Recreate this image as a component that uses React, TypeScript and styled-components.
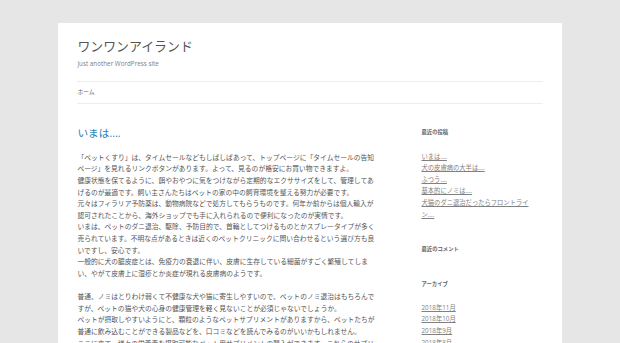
import React from 'react';
import styled, { createGlobalStyle } from 'styled-components';

const GlobalStyle = createGlobalStyle`
  html,
  body {
    margin: 0;
    padding: 0;
    background: #e6e6e6;
  }
  body {
    font-family: 'Open Sans', 'Noto Sans CJK JP', sans-serif;
    color: #444;
  }
`;

const recentPosts = [
  'いまは….',
  '犬の皮膚病の大半は….',
  'ふつう….',
  '基本的にノミは….',
  '犬猫のダニ退治だったらフロントライン….',
];

const archives = ['2018年11月', '2018年10月', '2018年9月', '2018年8月', '2018年7月'];

function App() {
  return (
    <>
      <GlobalStyle />
      <Site lang="ja">
        <Header>
          <SiteTitle>
            <a href="#">ワンワンアイランド</a>
          </SiteTitle>
          <Tagline>Just another WordPress site</Tagline>
          <Nav>
            <NavLink href="#">ホーム</NavLink>
          </Nav>
        </Header>
        <Main>
          <Content>
            <article>
              <EntryTitle>
                <a href="#">いまは….</a>
              </EntryTitle>
              <Paragraph>
                「ペットくすり」は、タイムセールなどもしばしばあって、トップページに「タイムセールの告知ページ」を見れるリンクボタンがあります。よって、見るのが格安にお買い物できますよ。
                <br />
                健康状態を保てるように、餌やおやつに気をつけながら定期的なエクササイズをして、管理してあげるのが最適です。飼い主さんたちはペットの家の中の飼育環境を整える努力が必要です。
                <br />
                元々はフィラリア予防薬は、動物病院などで処方してもらうものです。何年か前からは個人輸入が認可されたことから、海外ショップでも手に入れられるので便利になったのが実情です。
                <br />
                いまは、ペットのダニ退治、駆除、予防目的で、首輪としてつけるものとかスプレータイプが多く売られています。不明な点があるときは近くのペットクリニックに問い合わせるという選び方も良いですし、安心です。
                <br />
                一般的に犬の膿皮症とは、免疫力の衰退に伴い、皮膚に生存している細菌がすごく繁殖してしまい、やがて皮膚上に湿疹とか炎症が現れる皮膚病のようです。
              </Paragraph>
              <Paragraph>
                普通、ノミはとりわけ弱くて不健康な犬や猫に寄生しやすいので、ペットのノミ退治はもちろんですが、ペットの猫や犬の心身の健康管理を軽く見ないことが必須じゃないでしょうか。
                <br />
                ペットが摂取しやすいようにと、顆粒のようなペットサプリメントがありますから、ペットたちが普通に飲み込むことができる製品などを、口コミなどを読んでみるのがいいかもしれません。
                <br />
                ここに来て、様々の栄養素を摂取可能なペット用サプリメントの購入ができます。これらのサプリメントを上手に使って、ペットの健康を守りましょう。
              </Paragraph>
            </article>
          </Content>
          <Sidebar>
            <Widget>
              <WidgetTitle>最近の投稿</WidgetTitle>
              <WidgetList>
                {recentPosts.map((title) => (
                  <li key={title}>
                    <a href="#">{title}</a>
                  </li>
                ))}
              </WidgetList>
            </Widget>
            <Widget>
              <WidgetTitle>最近のコメント</WidgetTitle>
              <WidgetList />
            </Widget>
            <Widget>
              <WidgetTitle>アーカイブ</WidgetTitle>
              <WidgetList>
                {archives.map((month) => (
                  <li key={month}>
                    <a href="#">{month}</a>
                  </li>
                ))}
              </WidgetList>
            </Widget>
          </Sidebar>
        </Main>
      </Site>
    </>
  );
}

const Site = styled.div`
  box-sizing: content-box;
  max-width: 465.2px;
  margin: 23.3px auto;
  padding: 0 19.4px;
  background: #fff;
  overflow: hidden;
`;

const Header = styled.header`
  padding: 11.63px 0;
`;

const SiteTitle = styled.h1`
  margin: 0;
  font-size: 12.9px;
  line-height: 23.3px;
  font-weight: 400;
  a {
    color: #555;
    text-decoration: none;
  }
`;

const Tagline = styled.h2`
  margin: 0;
  font-size: 6.3px;
  line-height: 11.63px;
  font-weight: 400;
  color: #808080;
`;

const Nav = styled.nav`
  display: flex;
  margin-top: 11.63px;
  border-top: 1px solid #ededed;
  border-bottom: 1px solid #ededed;
`;

const NavLink = styled.a`
  font-size: 5.8px;
  line-height: 20.6px;
  color: #6a6a6a;
  text-decoration: none;
  white-space: nowrap;
`;

const Main = styled.div`
  display: flex;
  justify-content: space-between;
  align-items: flex-start;
  margin-top: 11.63px;
`;

const Content = styled.main`
  width: 302.9px;
`;

const EntryTitle = styled.h1`
  margin: 0 0 11.63px;
  font-size: 10.66px;
  line-height: 12.8px;
  font-weight: 400;
  a {
    color: #2a82b6;
    text-decoration: none;
  }
`;

const Paragraph = styled.p`
  margin: 0 0 11.63px;
  font-size: 6.78px;
  line-height: 11.63px;
  color: #555;
`;

const Sidebar = styled.aside`
  width: 121.1px;
`;

const Widget = styled.section`
  margin-bottom: 23.3px;
`;

const WidgetTitle = styled.h3`
  margin: 0 0 11.63px;
  font-size: 5.33px;
  line-height: 11.63px;
  font-weight: 700;
  color: #636363;
`;

const WidgetList = styled.ul`
  margin: 0;
  padding: 0;
  max-width: 116px;
  list-style: none;
  li {
    font-size: 6.3px;
    line-height: 11.63px;
  }
  a {
    color: #808080;
    text-decoration: underline;
  }
`;

export default App;
